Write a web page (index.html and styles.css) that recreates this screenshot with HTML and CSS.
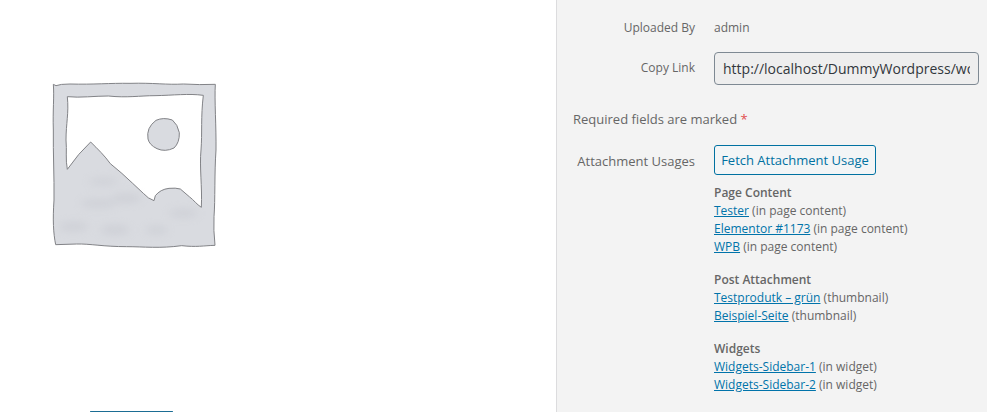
FILE: index.html
```html
<!DOCTYPE html>
<html lang="en">
<head>
<meta charset="utf-8">
<title>Attachment details</title>
<link rel="stylesheet" href="styles.css">
</head>
<body>
<main class="details">
  <section class="preview">
    <svg class="thumbnail" viewBox="0 0 570 570" aria-hidden="true">
      <defs>
        <filter id="soft" x="-30%" y="-30%" width="160%" height="160%"><feGaussianBlur stdDeviation="12"/></filter>
      </defs>
      <path class="shape" fill-rule="evenodd" d="M40 43 L48 47 Q60 42 90 42 C160 44 210 39 270 40 C340 38 380 45 430 42 Q480 45 526 43 C523 90 529 170 528 240 C523 310 526 390 522 440 Q520 480 525 526 C490 527 470 532 425 527 C360 536 310 530 260 530 C190 530 150 521 110 522 L47 524 C40 490 38 450 42 390 C43 320 39 250 40 180 C38 120 43 80 40 43 Z M82 80 C120 84 165 78 205 78 C260 84 300 77 345 77 C400 76 445 70 490 76 C482 140 487 190 483 240 C478 290 487 350 484 412 C470 403 461 390 449 381 L421 357 Q407 353 387 355 Q361 358 346 377 L342 392 Q324 386 310 370 L278 340 Q247 310 211 281 C194 257 173 237 152 216 Q116 249 82 298 C76 270 81 240 78 210 C78 160 87 130 82 80 Z"/>
      <path class="shape" d="M348 151 Q370 141 397 150 Q413 163 418 188 Q419 218 402 234 Q375 247 351 236 Q328 225 324 207 Q318 173 348 151 Z"/>
      <g class="shade" filter="url(#soft)">
        <ellipse cx="190" cy="335" rx="45" ry="10"/>
        <ellipse cx="175" cy="400" rx="55" ry="12"/>
        <ellipse cx="260" cy="385" rx="45" ry="14"/>
        <ellipse cx="100" cy="470" rx="45" ry="14"/>
        <ellipse cx="225" cy="480" rx="45" ry="15"/>
        <ellipse cx="430" cy="430" rx="45" ry="12"/>
        <ellipse cx="350" cy="480" rx="35" ry="12"/>
      </g>
    </svg>
    <div class="edit-button"></div>
  </section>
  <aside class="info">
    <div class="row row-author"><span class="label"><span class="t-uploaded">Uploaded By</span></span><span class="t-admin">admin</span></div>
    <div class="row row-link"><label class="label" for="url"><span class="t-copy">Copy Link</span></label><input id="url" class="url" readonly value="http://localhost/DummyWordpress/word"></div>
    <p class="required"><span class="t-required">Required fields are marked</span> <span class="star">*</span></p>
    <div class="row row-usage">
      <span class="label usage-label">Attachment Usages</span>
      <div class="usage">
        <button class="fetch">Fetch Attachment Usage</button>
        <div class="group"><b>Page Content</b><div><a>Tester</a> (in page content)</div><div><a>Elementor #1173</a> (in page content)</div><div><a>WPB</a> (in page content)</div></div>
        <div class="group"><b>Post Attachment</b><div><a>Testprodutk – grün</a> (thumbnail)</div><div><a>Beispiel-Seite</a> (thumbnail)</div></div>
        <div class="group"><b>Widgets</b><div><a>Widgets-Sidebar-1</a> (in widget)</div><div><a>Widgets-Sidebar-2</a> (in widget)</div></div>
      </div>
    </div>
  </aside>
</main>
</body>
</html>
```
FILE: styles.css
```css
* { box-sizing: border-box; }
body { margin: 0; background: #fff; font: 12px/18px "Open Sans", "Noto Sans", sans-serif; font-stretch: 90%; color: #666; }
.details { display: flex; width: 987px; height: 412px; overflow: hidden; }
.preview { width: 556px; flex: none; display: flex; flex-direction: column; justify-content: space-between; padding: 70px 0 0 40px; }
.thumbnail { width: 190px; height: 190px; display: block; }
.shape { fill: #d9dbe0; stroke: #828387; stroke-width: 3; stroke-linejoin: round; }
.shade { fill: #bfc1c9; opacity: .4; }
.edit-button { width: 83px; height: 1px; margin-left: 50px; background: #1b6d94; border-radius: 1px; }
.info { flex: 1; background: #f3f3f3; border-left: 1px solid #dcdcde; padding-left: 16px; }
.row { display: flex; }
.label { width: 122px; margin-right: 19px; flex: none; text-align: right; white-space: nowrap; }
.row-author { padding-top: 19px; height: 52px; }
.row-link { height: 58px; }
.row-link .label { padding-top: 7px; }
.url { width: 265px; height: 33px; padding: 0 8px; border: 1px solid #7e8993; border-radius: 4px; background: #eee; color: #32373c; font: 14px "Open Sans", sans-serif; font-stretch: 90%; }
.required { margin: 0; height: 35px; font-size: 13px; white-space: nowrap; }
.star { color: #e14d4d; }
.usage-label { font-size: 13px; padding-top: 7px; }
.usage { white-space: nowrap; }
.fetch { display: block; width: 162px; height: 30px; margin-bottom: 9px; padding: 0; border: 1px solid #0071a1; border-radius: 3px; background: #f3f5f6; color: #0071a1; font: 13px "Open Sans", sans-serif; font-stretch: 90%; white-space: nowrap; }
.group { margin-bottom: 15px; }
.group b { display: block; font-weight: 600; }
.group a { color: #0073aa; text-decoration: underline; }
```
